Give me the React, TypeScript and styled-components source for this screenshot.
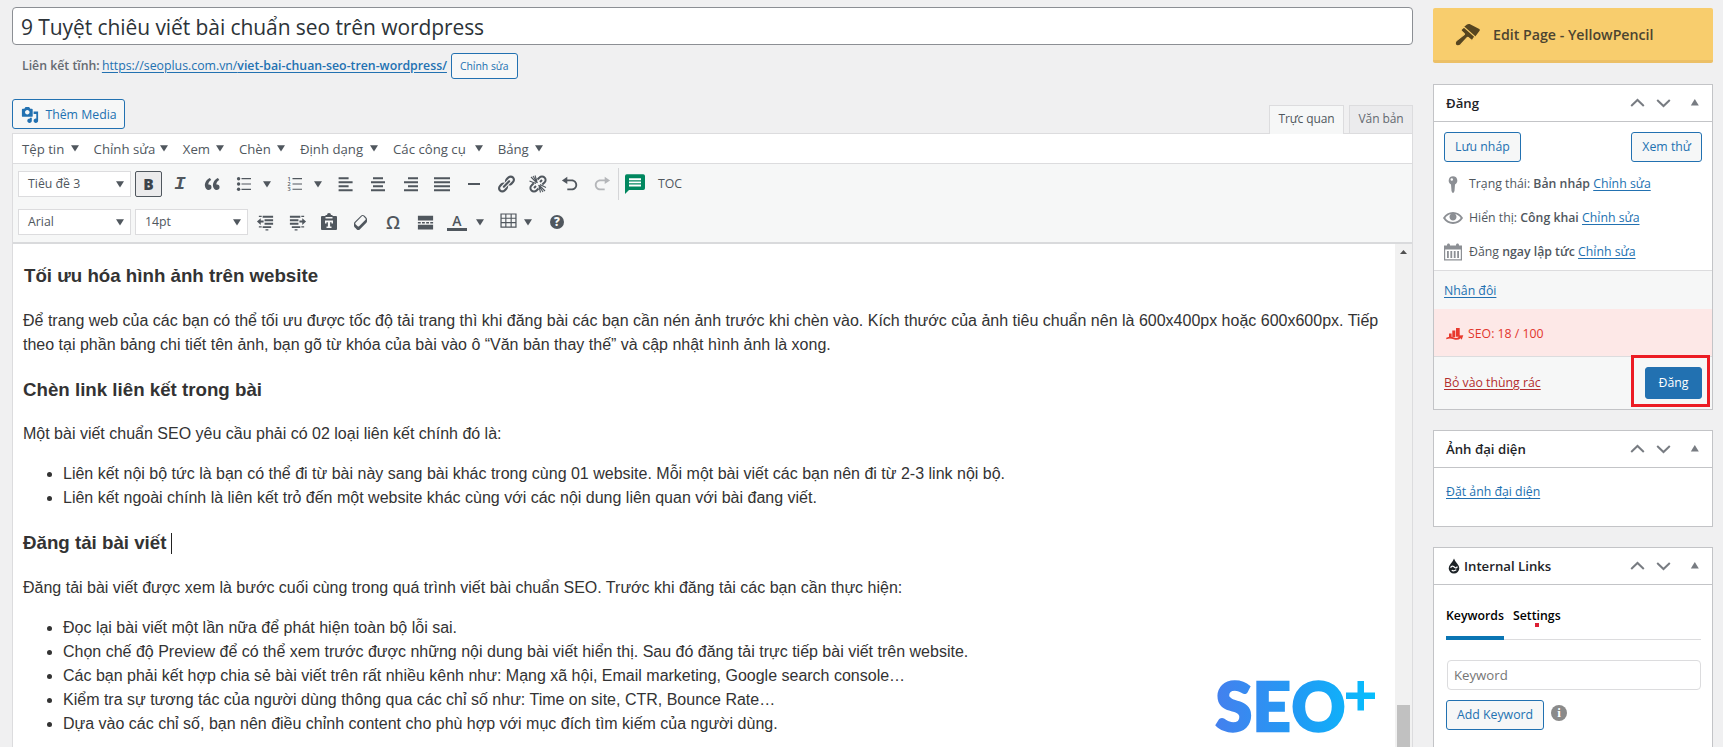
import React from "react";
import styled, { createGlobalStyle, css } from "styled-components";

const ui = `"Open Sans", "Noto Sans", sans-serif`;
const bodyFont = `"Liberation Sans", Arial, sans-serif`;
const blue = "#2271b1";
const ink = "#50575e";
const line = "#c3c4c7";

const Global = createGlobalStyle`
  *, *::before, *::after { box-sizing: border-box; }
  html, body { margin: 0; background: #f0f0f1; }
  body { font: 12.3px/20px ${ui}; color: ${ink}; overflow: hidden; }
  svg { display: block; flex: none; }
`;

const Page = styled.div`
  display: flex;
  align-items: flex-start;
  gap: 20px;
  height: 747px;
  padding-left: 12px;
  overflow: hidden;
`;

/* ---------- main column ---------- */

const Main = styled.main`
  display: flex;
  flex-direction: column;
  width: 1401px;
  height: 747px;
  padding-top: 7px;
`;

const TitleField = styled.div`
  flex: none;
  height: 38px;
  padding: 1px 8px 0;
  border: 1px solid #8c8f94;
  border-radius: 4px;
  background: #fff;
  color: #2c3338;
  font-size: 21px;
  letter-spacing: -0.08px;
  line-height: 37px;
`;

const Permalink = styled.div`
  display: flex;
  align-items: center;
  flex: none;
  height: 26px;
  margin-top: 8px;
  padding-left: 10px;
  color: #646970;
  white-space: pre;
`;

const PermalinkLabel = styled.strong`
  margin-right: -1px;
  font-weight: 600;
`;

const Strong = styled.strong`
  font-weight: 600;
`;

const Link = styled.a<{ $danger?: boolean }>`
  color: ${(p) => (p.$danger ? "#b32d2e" : blue)};
  text-decoration: underline;
  text-underline-offset: 2px;
`;

const Button = styled.button<{ $small?: boolean; $primary?: boolean }>`
  display: inline-flex;
  align-items: center;
  justify-content: center;
  height: 30px;
  padding: 0 10px;
  border: 1px solid ${blue};
  border-radius: 3px;
  background: #f6f7f7;
  color: ${blue};
  font: 12.3px/28px ${ui};
  white-space: nowrap;
  ${(p) =>
    p.$small &&
    css`
      height: 26px;
      margin-left: 4px;
      padding: 0 8px;
      font-size: 10.4px;
      line-height: 24px;
    `}
  ${(p) =>
    p.$primary &&
    css`
      width: 57px;
      height: 32px;
      padding: 0;
      background: ${blue};
      color: #fff;
    `}
`;

const Tools = styled.div`
  display: flex;
  justify-content: space-between;
  flex: none;
  height: 34px;
  margin-top: 20px;
`;

const MediaButton = styled(Button)`
  gap: 6px;
  width: 113px;
  padding: 1px 7px 0 8px;
`;

const Tabs = styled.div`
  display: flex;
  align-items: flex-start;
  gap: 5px;
  padding-top: 6px;
`;

const Tab = styled.div<{ $active?: boolean }>`
  position: relative;
  height: ${(p) => (p.$active ? 29 : 28)}px;
  width: ${(p) => (p.$active ? 75 : 64)}px;
  border: 1px solid #dcdcde;
  border-bottom: 0;
  background: ${(p) => (p.$active ? "#f6f7f7" : "#ebebed")};
  color: ${(p) => (p.$active ? ink : "#646970")};
  font-size: 12px;
  line-height: 26px;
  letter-spacing: -0.1px;
  text-align: center;
  z-index: 1;
`;

const Editor = styled.section`
  display: flex;
  flex-direction: column;
  flex: 1;
  min-height: 0;
  border: 1px solid #dcdcde;
  border-bottom: 0;
  background: #fff;
`;

const MenuBar = styled.div`
  display: flex;
  align-items: center;
  flex: none;
  gap: 14.6px;
  height: 30px;
  padding-left: 9px;
  border-bottom: 1px solid #dcdcde;
  font-size: 13.2px;
`;

const MenuItem = styled.div<{ $w: number }>`
  display: flex;
  align-items: center;
  justify-content: space-between;
  width: ${(p) => p.$w}px;
  white-space: nowrap;
`;

const Toolbar = styled.div`
  display: flex;
  flex-direction: column;
  flex: none;
  gap: 12px;
  height: 80px;
  padding: 7px 5px;
  border-bottom: 2px solid #d9dadc;
  background: #f6f7f7;
`;

const ToolRow = styled.div`
  display: flex;
  align-items: center;
  height: 26px;
`;

const Select = styled.div<{ $gap?: number }>`
  display: flex;
  align-items: center;
  justify-content: space-between;
  width: 112.5px;
  height: 26px;
  margin-right: ${(p) => p.$gap ?? 4.5}px;
  padding: 0 6px 0 9px;
  border: 1px solid #dcdcde;
  background: #fff;
`;

const Tool = styled.div<{ $dim?: boolean; $raise?: boolean }>`
  display: flex;
  align-items: center;
  justify-content: center;
  width: 32px;
  height: 26px;
  padding-bottom: ${(p) => (p.$raise ? 4 : 0)}px;
  color: ${(p) => (p.$dim ? "#b4b6b9" : ink)};
`;

const BoldTool = styled.div`
  width: 27px;
  height: 26px;
  margin-right: 2px;
  border: 1px solid ${ink};
  border-radius: 2px;
  background: #ebebec;
  color: #3c434a;
  font: 800 15.5px/24px ${ui};
  text-align: center;
`;

const ItalicTool = styled(Tool)`
  font: italic 700 19px/26px "Liberation Mono", monospace;
`;

const OmegaTool = styled(Tool)`
  font: 600 18px/26px "Open Sans", sans-serif;
`;

const ColorTool = styled(Tool)`
  font: 600 14px/16px ${ui};
`;

const ColorBar = styled.span`
  display: flex;
  flex-direction: column;
  align-items: center;
  width: 20px;
  height: 18px;
  border-bottom: 3px solid ${ink};
`;

const ArrowSlot = styled.div<{ $w?: number; $pad?: number }>`
  width: ${(p) => p.$w ?? 19}px;
  padding-left: ${(p) => p.$pad ?? 3}px;
`;

const Separator = styled.div`
  width: 1px;
  height: 32px;
  margin-right: 6px;
  background: #d5d6d8;
`;

const TocLabel = styled.span`
  margin-left: 13px;
`;

const Frame = styled.div`
  position: relative;
  display: flex;
  flex: 1;
  min-height: 0;
`;

const Article = styled.article`
  flex: 1;
  min-width: 0;
  padding: 18px 10px 0;
  color: #333;
  font: 16px/24px ${bodyFont};
  p { margin: 0 0 16px; }
  ul { margin: 0 0 16px; padding-left: 40px; }
`;

const Heading = styled.h3<{ $inset?: boolean }>`
  display: flex;
  align-items: center;
  margin: 0 0 18.72px;
  padding-left: ${(p) => (p.$inset ? 1 : 0)}px;
  font-size: 18.72px;
  line-height: 28px;
  p + &, ul + & { margin-top: 19px; }
`;

const Caret = styled.span`
  width: 1px;
  height: 21px;
  margin-left: 5px;
  background: #222;
`;

const ScrollTrack = styled.div`
  display: flex;
  flex-direction: column;
  align-items: center;
  justify-content: space-between;
  width: 17px;
  padding-top: 6px;
  background: #f1f1f1;
`;

const ScrollThumb = styled.div`
  width: 13px;
  height: 42px;
  background: #c1c1c1;
`;

const Watermark = styled.div`
  position: absolute;
  right: 31px;
  bottom: 4px;
`;

/* ---------- side column ---------- */

const Side = styled.aside`
  display: flex;
  flex-direction: column;
  width: 280px;
  padding-top: 8px;
`;

const PencilButton = styled.div`
  display: flex;
  align-items: center;
  gap: 13px;
  height: 55px;
  margin-bottom: 21px;
  padding: 2px 0 0 21px;
  border-bottom: 3px solid #ecc067;
  border-radius: 2px;
  background: #f8cd6d;
  color: #4c4430;
  font-size: 14.2px;
  font-weight: 600;
`;

const Panel = styled.section<{ $h: number }>`
  flex: none;
  height: ${(p) => p.$h}px;
  margin-bottom: 20px;
  border: 1px solid ${line};
  background: #fff;
`;

const PanelHead = styled.header`
  display: flex;
  align-items: center;
  height: 37px;
  padding: 0 12px;
  border-bottom: 1px solid ${line};
  color: #1d2327;
  font-size: 13.2px;
  font-weight: 600;
`;

const PanelTitle = styled.h2`
  display: flex;
  align-items: center;
  flex: 1;
  gap: 4px;
  margin: 0;
  font: inherit;
`;

const Actions = styled.div`
  display: flex;
  justify-content: space-between;
  padding: 10px 10px 5px;
`;

const MetaRow = styled.div`
  display: flex;
  align-items: center;
  gap: 6px;
  height: 34px;
  padding-left: 9px;
  color: #8c8f94;
`;

const MetaText = styled.span`
  color: ${ink};
  white-space: pre;
`;

const Duplicate = styled.div`
  height: 39px;
  margin-top: 1px;
  padding: 10px 10px 0;
  border-top: 1px solid #dcdcde;
  background: #f6f7f7;
`;

const SeoScore = styled.div`
  display: flex;
  align-items: center;
  gap: 4px;
  height: 48px;
  padding: 3px 0 0 12px;
  border-bottom: 1px solid #dcdcde;
  background: #fde8e7;
  color: #e2352b;
  font-weight: 500;
`;

const PublishBar = styled.div`
  display: flex;
  align-items: center;
  justify-content: space-between;
  height: 52px;
  padding-left: 10px;
  background: #f6f7f7;
`;

const Highlight = styled.div`
  display: flex;
  align-items: center;
  justify-content: flex-end;
  width: 79px;
  height: 52px;
  margin: -4px 2px 0 0;
  padding: 4px 5px 0 0;
  border: 3px solid #ec1c24;
  z-index: 1;
`;

const FeatureBody = styled.div`
  padding: 14px 12px;
`;

const LinksBody = styled.div`
  padding: 20px 11px 0 12px;
`;

const LinkTabs = styled.div`
  display: flex;
  gap: 9px;
  height: 35px;
  border-bottom: 1px solid #dcdcde;
  color: #000;
  font-weight: 600;
  line-height: 22px;
`;

const LinkTab = styled.div<{ $active?: boolean }>`
  position: relative;
  height: 35px;
  border-bottom: 4px solid ${(p) => (p.$active ? "#0a75b3" : "transparent")};
`;

const RedDot = styled.i`
  position: absolute;
  top: 18px;
  left: 22px;
  width: 4px;
  height: 4px;
  background: #dc1f33;
`;

const KeywordInput = styled.div`
  height: 30px;
  margin: 20px 0 10px 1px;
  padding-left: 6px;
  border: 1px solid #dcdcde;
  border-radius: 4px;
  color: #757575;
  font-size: 13.2px;
  line-height: 28px;
`;

const AddRow = styled.div`
  display: flex;
  align-items: center;
  gap: 7px;
`;

const InfoBadge = styled.span`
  width: 16px;
  height: 16px;
  margin-top: -4px;
  border-radius: 50%;
  background: #8a8a8a;
  color: #fff;
  font: 700 13px/16px "Liberation Serif", serif;
  text-align: center;
`;

/* ---------- icons ---------- */

type IconProps = { d: string; size?: number };
const Icon = ({ d, size = 20 }: IconProps) => (
  <svg width={size} height={size} viewBox="0 0 20 20" fill="currentColor">
    <path d={d} />
  </svg>
);

const Down = () => (
  <svg width="8" height="7" viewBox="0 0 8 7" fill="#50575e">
    <path d="M0 .3h8L4 6.6z" />
  </svg>
);

const icons = {
  media:
    "M13 11V4c0-.55-.45-1-1-1h-1.67L9 1H5L3.67 3H2c-.55 0-1 .45-1 1v7c0 .55.45 1 1 1h10c.55 0 1-.45 1-1zM7 4.5c1.38 0 2.5 1.12 2.5 2.5S8.38 9.5 7 9.5 4.5 8.38 4.5 7 5.62 4.5 7 4.5zM14 6h5v10.5c0 1.38-1.12 2.5-2.5 2.5S14 17.88 14 16.5s1.12-2.5 2.5-2.5c.17 0 .34.02.5.05V9h-3V6zm-4 8.05V13h2v3.5c0 1.38-1.12 2.5-2.5 2.5S7 17.88 7 16.5 8.12 14 9.5 14c.17 0 .34.02.5.05z",
  quote:
    "M9.49 13.22c0-.74-.2-1.38-.61-1.9-.62-.78-1.83-.88-2.53-.72-.29-1.65 1.11-3.75 2.92-4.65L7.88 4c-2.73 1.3-5.42 4.28-4.96 8.05C3.21 14.43 4.59 16 6.54 16c.85 0 1.56-.25 2.12-.75s.83-1.18.83-2.03zm8.05 0c0-.74-.2-1.38-.61-1.9-.63-.78-1.83-.88-2.53-.72-.29-1.65 1.11-3.75 2.92-4.65L15.93 4c-2.73 1.3-5.41 4.28-4.95 8.05.29 2.38 1.66 3.95 3.61 3.95.85 0 1.56-.25 2.12-.75s.83-1.18.83-2.03z",
  left: "M2.600 3.200h10v2h-10zM2.600 7.200h14v2h-14zM2.600 11.200h10v2h-10zM2.600 15.200h14v2h-14z",
  center: "M5 3.200h10v2H5zM3 7.200h14v2H3zM5 11.200h10v2H5zM3 15.200h14v2H3z",
  right: "M8 3.200h10v2H8zM4 7.200h14v2H4zM8 11.200h10v2H8zM4 15.200h14v2H4z",
  justify: "M2 3.200h16v2H2zM2 7.200h16v2H2zM2 11.200h16v2H2zM2 15.200h16v2H2z",
  rule: "M4 9h12v2H4z",
  link: "M17.74 2.76c1.68 1.69 1.68 4.41 0 6.1l-1.53 1.52c-1.12 1.12-2.7 1.47-4.14 1.09l2.62-2.61.76-.77.76-.76c.84-.84.84-2.2 0-3.04-.84-.85-2.2-.85-3.04 0l-.77.76-3.38 3.38c-.37-1.44-.02-3.02 1.1-4.14l1.52-1.53c1.69-1.68 4.42-1.68 6.1 0zM8.59 13.43l5.34-5.34c.42-.42.42-1.1 0-1.52-.44-.43-1.13-.39-1.53 0l-5.33 5.34c-.42.42-.42 1.1 0 1.52.44.43 1.13.39 1.52 0zm-.76 2.29l4.14-4.15c.38 1.44.03 3.02-1.09 4.14l-1.52 1.53c-1.69 1.68-4.41 1.68-6.1 0-1.68-1.68-1.68-4.42 0-6.1l1.53-1.52c1.12-1.12 2.7-1.47 4.14-1.1l-4.14 4.15c-.85.84-.85 2.2 0 3.05.84.84 2.2.84 3.04 0z",
  undo: "M12 5H7V2L1 6l6 4V7h5c2.2 0 4 1.8 4 4s-1.8 4-4 4H7v2h5c3.3 0 6-2.7 6-6s-2.7-6-6-6z",
  redo: "M8 5h5V2l6 4-6 4V7H8c-2.2 0-4 1.8-4 4s1.8 4 4 4h5v2H8c-3.3 0-6-2.7-6-6s2.7-6 6-6z",
  outdent:
    "M7 3h11v2H7zM9 6.7h9v2H9zM9 10.3h9v2H9zM7 14h9v1.8H7zM10 17h3v1.5h-3zM3 3h3v1.2H3zM3 14h3v1.2H3zM5 5.5v2.5h3v2H5v2.5L1 9z",
  indent:
    "M2 3h11v2H2zM2 6.7h9v2H2zM2 10.3h9v2H2zM4 14h9v1.8H4zM7 17h3v1.5H7zM14 3h3v1.2h-3zM14 14h3v1.2h-3zM15 5.5v2.5h-3v2h3v2.5L19 9z",
  eraser:
    "M14.29 4.59l1.1 1.11c.41.4.61.94.61 1.47v2.12c0 .53-.2 1.07-.61 1.47l-6.63 6.63c-.4.41-.94.61-1.47.61s-1.07-.2-1.47-.61l-1.11-1.1-1.1-1.11c-.41-.4-.61-.94-.61-1.47v-2.12c0-.54.2-1.07.61-1.48l6.63-6.62c.4-.41.94-.61 1.47-.61s1.06.2 1.47.61zm-6.21 9.7l6.42-6.42c.39-.39.39-1.03 0-1.43L12.36 4.3c-.19-.19-.45-.29-.72-.29s-.52.1-.71.29l-6.42 6.42c-.39.4-.39 1.04 0 1.43l2.14 2.14c.38.38 1.04.38 1.43 0z",
  more: "M2 3h16v5H2zM2 9.4h3v1.6H2zM6.3 9.4h3v1.6h-3zM10.7 9.4h3v1.6h-3zM15 9.4h3v1.6h-3zM2 12.4h16v5H2z",
  table:
    "M1.5 2.5h17v15h-17zM2.8 3.800v3.200h3.800V3.800zM7.800 3.800v3.200h4.400V3.800zM13.400 3.800v3.200h3.800V3.800zM2.800 8.200v3.400h3.800V8.200zM7.800 8.200v3.400h4.400V8.200zM13.400 8.200v3.400h3.800V8.200zM2.800 12.800v3.400h3.800v-3.400zM7.800 12.800v3.400h4.400v-3.400zM13.400 12.800v3.400h3.800v-3.400z",
  paste:
    "M3 4h3.500V3H8a2 2 0 0 1 4 0h1.500v1H17a1 1 0 0 1 1 1v12a1 1 0 0 1-1 1H3a1 1 0 0 1-1-1V5a1 1 0 0 1 1-1zM6 8.500v3h1.500v-1.200h1.400v4.200H7.500V16h5v-1.500h-1.400v-4.200h1.400v1.200H14v-3zM6.500 5v1.500h7V5z",
  eye: "M19.7 9.4C17.7 6 14 3.9 10 3.9S2.3 6 .3 9.4L0 10l.3.6c2 3.4 5.7 5.5 9.7 5.5s7.7-2.1 9.7-5.5l.3-.6-.3-.6zM10 14.1c-3.1 0-6-1.6-7.7-4.1C3.6 8 5.7 6.600 8 6.100c-.9.600-1.500 1.700-1.500 2.900 0 1.900 1.600 3.500 3.500 3.500s3.500-1.600 3.500-3.500c0-1.200-.6-2.300-1.500-2.900 2.300.5 4.400 1.900 5.700 3.900-1.700 2.500-4.600 4.100-7.700 4.100zM9.500 5.800a2.500 2.500 0 1 0 .1 0z",
  calendar:
    "M15 3.500h4V18.500H1V3.500h3V3c0-.83.67-1.500 1.500-1.500S7 2.170 7 3v.5h6V3c0-.83.67-1.500 1.500-1.500S16 2.170 16 3v.5zM2.200 7.500v9.800h15.600V7.500zM4 9h1.800v7H4zM7.400 9h1.800v7H7.400zM10.800 9h1.800v7h-1.800zM14.200 9H16v7h-1.800z",
};

const BulletList = () => (
  <svg width="16" height="16" viewBox="0 0 16 16" fill={ink}>
    <circle cx="2.600" cy="2.700" r="1.700" />
    <circle cx="2.600" cy="8" r="1.700" />
    <circle cx="2.600" cy="13.300" r="1.700" />
    <path d="M5.500 2.100H15v1.200H5.500zM5.500 7.400H15v1.200H5.500zM5.500 12.700H15v1.200H5.500z" />
  </svg>
);

const Numbers = styled.svg`
  font: 600 5.5px ${ui};
`;

const NumberList = () => (
  <Numbers width="16" height="16" viewBox="0 0 16 16" fill={ink}>
    <text x="0.500" y="4.500">1</text>
    <text x="0.500" y="9.800">2</text>
    <text x="0.500" y="15.100">3</text>
    <path d="M5.500 2.100H15v1.100H5.500zM5.500 7.400H15v1.100H5.500zM5.500 12.700H15v1.100H5.500z" />
  </Numbers>
);

const Unlink = () => (
  <svg width="20" height="20" viewBox="0 0 20 20" fill="none" stroke={ink}>
    <path
      strokeWidth="2"
      d="M9.500 5.500l2-2a3.400 3.400 0 0 1 5 0 3.400 3.400 0 0 1 0 5l-2.200 2M12 8l2-2M10.500 14.500l-2 2a3.400 3.400 0 0 1-5 0 3.400 3.400 0 0 1 0-5L5.700 9.300M8 12l-2 2"
    />
    <path
      strokeWidth="1.100"
      d="M8.500 8.500L3 3M8 9.500L1.500 7M9 7.500L7 1.500M11.500 11.500L17 17M12 10.500l6 3M11 12.500l1.500 6M10.500 11l4.500 7M9.500 9L5 2"
    />
  </svg>
);

const CommentIcon = () => (
  <svg width="20" height="20" viewBox="0 0 20 20">
    <path
      fill="#00875f"
      d="M2 .3h16.200a1.800 1.800 0 0 1 1.800 1.800v12.200a1.800 1.800 0 0 1-1.800 1.800H4L0 20V2.200A1.900 1.900 0 0 1 2 .3z"
    />
    <path fill="#fff" d="M4 4.300h12v1.900H4zM4 7.400h12v1.900H4zM4 10.500h12v1.900H4z" />
  </svg>
);

const HelpBadge = styled.span`
  width: 14px;
  height: 14px;
  border-radius: 50%;
  background: ${ink};
  color: #f6f7f7;
  font: 800 11.5px/14px ${ui};
  text-align: center;
`;

const Brush = () => (
  <svg width="26" height="24" viewBox="0 0 26 24" fill="#564520">
    <path d="M9.800 4L13 1.500q1.200-.9 2.600-.5l9.700 5q1 .8.1 1.900L20.500 14.500z" />
    <path
      stroke="#f8cd6d"
      strokeWidth="1.200"
      d="M7.400 6.200l2.600-2.200 10.800 9.600-2 3q-1 1-2 .1l-2.600-2.200q-.6-.2-1.100.2l-6.600 7.300q-2.400 1.800-4.500.2-1.700-1.900.2-4.300l8-6.300q.5-.5 0-1l-2.800-2.600q-.8-1 0-1.800z"
    />
  </svg>
);

const Pin = () => (
  <svg width="20" height="20" viewBox="0 0 20 20" fill="currentColor">
    <path d="M10 2.300a4.300 4.300 0 0 1 2 8.100l-.5 6.600q-.7 2-1.500 2t-1.500-2L8 10.400a4.300 4.300 0 0 1 2-8.100z" />
    <circle cx="8.800" cy="5.500" r="1.200" fill="#fff" />
  </svg>
);

const SeoIcon = () => (
  <svg width="18" height="14" viewBox="0 0 18 14" fill="#e8392d">
    <path d="M3 6.500h2.600v3.800H3zM6.300 3.500h3v6.800h-3zM10 1h3.700v8.800H10z" />
    <path d="M.3 10.800q4-1.700 7.500-.3 3 1.300 5.200-.7L11.500 8.500l5.800-.2-1.600 4.400-1-1.400q-3.200 2.500-7 1-3.600-1.300-7.400-.1z" />
  </svg>
);

const Drop = () => (
  <svg width="14" height="16" viewBox="0 0 14 16">
    <path
      fill="#1d2327"
      d="M8 .5q.8 2.500 3.300 5.300Q13.300 8.200 13.300 10.300A5.300 5.300 0 0 1 2.700 10.300Q2.700 8.200 4.700 5.800 7.200 3 8 .5z"
    />
    <g fill="none" stroke="#fff" strokeWidth="1.200">
      <path d="M4.600 9.700q1.200-2.300 3-1.200l1.500 1.300q1.600.6 2.200-1.300" />
      <path d="M5.700 12.300q2 1.200 4.600-.5" />
    </g>
  </svg>
);

const HeadControls = () => (
  <svg width="74" height="16" viewBox="0 0 74 16">
    <g fill="none" stroke="#787c82" strokeWidth="2">
      <path d="M5.200 11l6.300-6 6.300 6M31.200 5l6.300 6 6.300-6" />
    </g>
    <path fill="#787c82" d="M68.800 4l4 6.500h-8z" />
  </svg>
);

const LogoText = styled.svg`
  font: 900 66.500px Lato, sans-serif;
`;

const Logo = () => (
  <LogoText width="166" height="74" viewBox="0 0 166 74">
    <defs>
      <linearGradient id="seo" gradientUnits="userSpaceOnUse" x1="0" y1="0" x2="160" y2="0">
        <stop offset="0" stopColor="#4480ee" />
        <stop offset=".55" stopColor="#1f9df5" />
        <stop offset="1" stopColor="#06befd" />
      </linearGradient>
    </defs>
    <g fill="url(#seo)" stroke="url(#seo)" strokeWidth="2.400">
      <text y="61.500" x="0.500 37.500 76.500">SEO</text>
      <path stroke="none" d="M142.500 12h6.500v11.500H160V30h-11v11.500h-6.500V30H131v-6.500h11.500z" />
    </g>
  </LogoText>
);

/* ---------- page ---------- */

const menus: [string, number][] = [
  ["Tệp tin", 57],
  ["Chỉnh sửa", 74.6],
  ["Xem", 41.5],
  ["Chèn", 46.5],
  ["Định dạng", 78.5],
  ["Các công cụ", 90],
  ["Bảng", 45],
];

const Head = ({ children }: { children: React.ReactNode }) => (
  <PanelHead>
    <PanelTitle>{children}</PanelTitle>
    <HeadControls />
  </PanelHead>
);

export default function App() {
  return (
    <Page>
      <Global />
      <Main>
        <TitleField>9 Tuyệt chiêu viết bài chuẩn seo trên wordpress</TitleField>
        <Permalink>
          <PermalinkLabel>Liên kết tĩnh: </PermalinkLabel>
          <Link>
            https://seoplus.com.vn/<Strong>viet-bai-chuan-seo-tren-wordpress/</Strong>
          </Link>
          <Button $small>Chỉnh sửa</Button>
        </Permalink>
        <Tools>
          <MediaButton>
            <Icon d={icons.media} size={18} />
            Thêm Media
          </MediaButton>
          <Tabs>
            <Tab $active>Trực quan</Tab>
            <Tab>Văn bản</Tab>
          </Tabs>
        </Tools>
        <Editor>
          <MenuBar>
            {menus.map(([label, w]) => (
              <MenuItem key={label} $w={w}>
                {label}
                <Down />
              </MenuItem>
            ))}
          </MenuBar>
          <Toolbar>
            <ToolRow>
              <Select>
                Tiêu đề 3<Down />
              </Select>
              <BoldTool>B</BoldTool>
              <ItalicTool>I</ItalicTool>
              <Tool><Icon d={icons.quote} /></Tool>
              <Tool><BulletList /></Tool>
              <ArrowSlot><Down /></ArrowSlot>
              <Tool><NumberList /></Tool>
              <ArrowSlot><Down /></ArrowSlot>
              <Tool><Icon d={icons.left} /></Tool>
              <Tool><Icon d={icons.center} /></Tool>
              <Tool><Icon d={icons.right} /></Tool>
              <Tool><Icon d={icons.justify} /></Tool>
              <Tool><Icon d={icons.rule} /></Tool>
              <Tool><Icon d={icons.link} /></Tool>
              <Tool><Unlink /></Tool>
              <Tool><Icon d={icons.undo} size={18} /></Tool>
              <Tool $dim><Icon d={icons.redo} size={18} /></Tool>
              <Separator />
              <CommentIcon />
              <TocLabel>TOC</TocLabel>
            </ToolRow>
            <ToolRow>
              <Select>
                Arial<Down />
              </Select>
              <Select $gap={1.5}>
                14pt<Down />
              </Select>
              <Tool><Icon d={icons.outdent} size={19} /></Tool>
              <Tool><Icon d={icons.indent} size={19} /></Tool>
              <Tool><Icon d={icons.paste} /></Tool>
              <Tool><Icon d={icons.eraser} /></Tool>
              <OmegaTool>Ω</OmegaTool>
              <Tool><Icon d={icons.more} size={19} /></Tool>
              <ColorTool>
                <ColorBar>A</ColorBar>
              </ColorTool>
              <ArrowSlot><Down /></ArrowSlot>
              <Tool $raise><Icon d={icons.table} size={19} /></Tool>
              <ArrowSlot $w={17} $pad={0}><Down /></ArrowSlot>
              <Tool>
                <HelpBadge>?</HelpBadge>
              </Tool>
            </ToolRow>
          </Toolbar>
          <Frame>
            <Article>
              <Heading $inset>Tối ưu hóa hình ảnh trên website</Heading>
              <p>
                Để trang web của các bạn có thể tối ưu được tốc độ tải trang thì khi đăng bài các bạn cần nén ảnh trước khi
                chèn vào. Kích thước của ảnh tiêu chuẩn nên là 600x400px hoặc 600x600px. Tiếp theo tại phần bảng chi tiết tên
                ảnh, bạn gõ từ khóa của bài vào ô “Văn bản thay thế” và cập nhật hình ảnh là xong.
              </p>
              <Heading>Chèn link liên kết trong bài</Heading>
              <p>Một bài viết chuẩn SEO yêu cầu phải có 02 loại liên kết chính đó là:</p>
              <ul>
                <li>
                  Liên kết nội bộ tức là bạn có thể đi từ bài này sang bài khác trong cùng 01 website. Mỗi một bài viết các
                  bạn nên đi từ 2-3 link nội bộ.
                </li>
                <li>
                  Liên kết ngoài chính là liên kết trỏ đến một website khác cùng với các nội dung liên quan với bài đang
                  viết.
                </li>
              </ul>
              <Heading>
                Đăng tải bài viết
                <Caret />
              </Heading>
              <p>
                Đăng tải bài viết được xem là bước cuối cùng trong quá trình viết bài chuẩn SEO. Trước khi đăng tải các bạn
                cần thực hiện:
              </p>
              <ul>
                <li>Đọc lại bài viết một lần nữa để phát hiện toàn bộ lỗi sai.</li>
                <li>
                  Chọn chế độ Preview để có thể xem trước được những nội dung bài viết hiển thị. Sau đó đăng tải trực tiếp
                  bài viết trên website.
                </li>
                <li>
                  Các bạn phải kết hợp chia sẻ bài viết trên rất nhiều kênh như: Mạng xã hội, Email marketing, Google search
                  console…
                </li>
                <li>
                  Kiểm tra sự tương tác của người dùng thông qua các chỉ số như: Time on site, CTR, Bounce Rate…
                </li>
                <li>
                  Dựa vào các chỉ số, bạn nên điều chỉnh content cho phù hợp với mục đích tìm kiếm của người dùng.
                </li>
              </ul>
            </Article>
            <ScrollTrack>
              <svg width="7" height="4" viewBox="0 0 7 4">
                <path fill="#505050" d="M3.500 0L7 4H0z" />
              </svg>
              <ScrollThumb />
            </ScrollTrack>
            <Watermark>
              <Logo />
            </Watermark>
          </Frame>
        </Editor>
      </Main>

      <Side>
        <PencilButton>
          <Brush />
          Edit Page - YellowPencil
        </PencilButton>

        <Panel $h={326}>
          <Head>Đăng</Head>
          <Actions>
            <Button>Lưu nháp</Button>
            <Button>Xem thử</Button>
          </Actions>
          <MetaRow>
            <Pin />
            <MetaText>
              Trạng thái: <Strong>Bản nháp</Strong> <Link>Chỉnh sửa</Link>
            </MetaText>
          </MetaRow>
          <MetaRow>
            <Icon d={icons.eye} />
            <MetaText>
              Hiển thị: <Strong>Công khai</Strong> <Link>Chỉnh sửa</Link>
            </MetaText>
          </MetaRow>
          <MetaRow>
            <Icon d={icons.calendar} />
            <MetaText>
              Đăng <Strong>ngay lập tức</Strong> <Link>Chỉnh sửa</Link>
            </MetaText>
          </MetaRow>
          <Duplicate>
            <Link>Nhân đôi</Link>
          </Duplicate>
          <SeoScore>
            <SeoIcon />
            SEO: 18 / 100
          </SeoScore>
          <PublishBar>
            <Link $danger>Bỏ vào thùng rác</Link>
            <Highlight>
              <Button $primary>Đăng</Button>
            </Highlight>
          </PublishBar>
        </Panel>

        <Panel $h={97}>
          <Head>Ảnh đại diện</Head>
          <FeatureBody>
            <Link>Đặt ảnh đại diện</Link>
          </FeatureBody>
        </Panel>

        <Panel $h={260}>
          <Head>
            <Drop />
            Internal Links
          </Head>
          <LinksBody>
            <LinkTabs>
              <LinkTab $active>Keywords</LinkTab>
              <LinkTab>
                Settings
                <RedDot />
              </LinkTab>
            </LinkTabs>
            <KeywordInput>Keyword</KeywordInput>
            <AddRow>
              <Button>Add Keyword</Button>
              <InfoBadge>i</InfoBadge>
            </AddRow>
          </LinksBody>
        </Panel>
      </Side>
    </Page>
  );
}
